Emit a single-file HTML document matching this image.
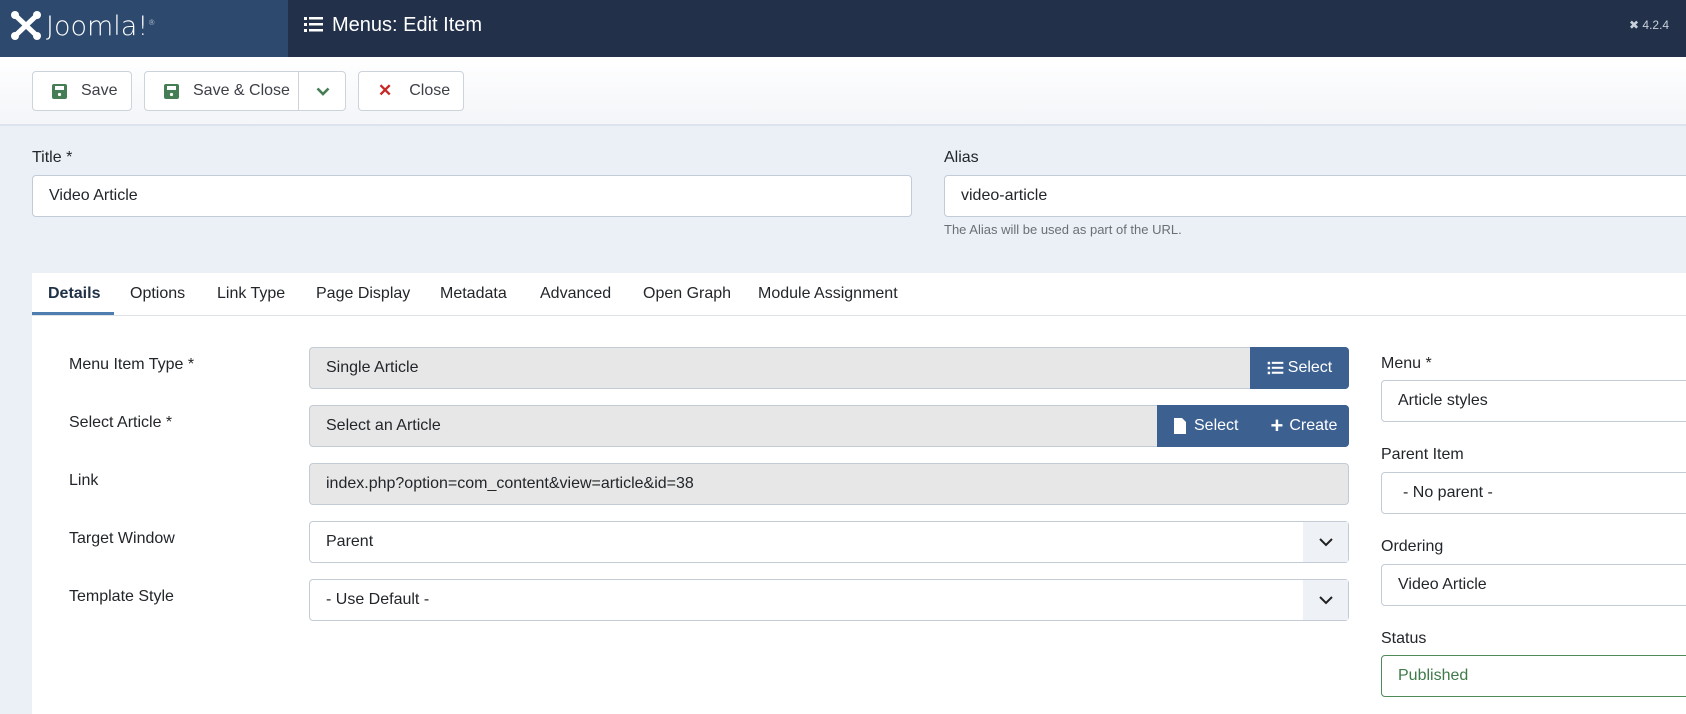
<!DOCTYPE html>
<html><head><meta charset="utf-8"><style>
*{box-sizing:border-box;margin:0;padding:0}
body{width:1686px;height:714px;overflow:hidden;background:#ebf0f6;font-family:"Liberation Sans",sans-serif;color:#22262a;position:relative}
.abs{position:absolute}
.hdr{left:0;top:0;width:1686px;height:57px;background:#22304a}
.logo{left:0;top:0;width:288px;height:57px;background:#2d4a6e}
.tb{left:0;top:57px;width:1686px;height:69px;background:linear-gradient(#fff,#f3f5f8);border-bottom:2px solid #dde3ec}
.btn{position:absolute;top:71px;height:40px;background:#fff;border:1px solid #cdd3da;border-radius:4px;font-size:16px;color:#3d4047;display:flex;align-items:center}
.lbl{position:absolute;font-size:16px;color:#22262a}
.inp{position:absolute;height:42px;background:#fff;border:1px solid #c3ccd6;border-radius:4px;font-size:16px;display:flex;align-items:center;padding-left:16px;color:#22262a}
.ro{background:#e7e7e7}
.bb{position:absolute;background:#3c6090;color:#fff;font-size:16px;display:flex;align-items:center;justify-content:center;gap:4px}
.chev{position:absolute;right:0;top:0;width:45px;height:40px;background:#eef2f7;display:flex;align-items:center;justify-content:center}
.tab{position:absolute;top:285px;font-size:16px;color:#22262a}
</style></head><body>
<div class="abs hdr"></div>
<div class="abs logo"></div>
<svg class="abs" style="left:10px;top:9px" width="32" height="32" viewBox="0 0 32 32"><g fill="none" stroke="#fff" stroke-width="5" stroke-linecap="round"><path d="M7 8 L25 25"/><path d="M25 8 L7 25"/></g><g fill="#fff"><circle cx="5" cy="6" r="4"/><circle cx="27" cy="6" r="4"/><circle cx="5" cy="27" r="4"/><circle cx="27" cy="27" r="4"/></g></svg>
<div class="abs" style="left:46px;top:11px;color:#fff;font-size:27px;font-family:'DejaVu Sans',sans-serif;font-weight:200;letter-spacing:0">Joomla!<sup style="font-size:7px">®</sup></div>
<svg class="abs" style="left:304px;top:16px" width="19" height="17" viewBox="0 0 19 17" fill="#fff"><rect x="0" y="1" width="3" height="3"/><rect x="0" y="7" width="3" height="3"/><rect x="0" y="13" width="3" height="3"/><rect x="5" y="1" width="14" height="2.5"/><rect x="5" y="7" width="14" height="2.5"/><rect x="5" y="13" width="14" height="2.5"/></svg>
<div class="abs" style="left:332px;top:14px;color:#fff;font-size:20px">Menus: Edit Item</div>
<div class="abs" style="left:1629px;top:18px;color:#c9d1dc;font-size:12px">✖ 4.2.4</div>
<div class="abs tb"></div>
<div class="btn" style="left:32px;width:100px"><svg style="margin:0 14px 0 19px" width="15" height="15" viewBox="0 0 15 15"><rect width="15" height="15" rx="2" fill="#457d54"/><rect x="3" y="2" width="9" height="4" fill="#fff"/><circle cx="7.5" cy="10.5" r="1.6" fill="#fff"/></svg>Save</div>
<div class="btn" style="left:144px;width:202px"><svg style="margin:0 14px 0 19px" width="15" height="15" viewBox="0 0 15 15"><rect width="15" height="15" rx="2" fill="#457d54"/><rect x="3" y="2" width="9" height="4" fill="#fff"/><circle cx="7.5" cy="10.5" r="1.6" fill="#fff"/></svg>Save &amp; Close<div style="position:absolute;left:153px;top:0;bottom:0;border-left:1px solid #cdd3da;width:48px;display:flex;align-items:center;justify-content:center"><svg width="14" height="9" viewBox="0 0 14 9"><path d="M1.5 1.5 L7 7 L12.5 1.5" stroke="#457d54" stroke-width="2.6" fill="none"/></svg></div></div>
<div class="btn" style="left:358px;width:106px"><span style="color:#c52827;font-weight:bold;font-size:17px;margin:0 17px 0 19px">✕</span>Close</div>

<div class="lbl" style="left:32px;top:149px">Title *</div>
<div class="inp" style="left:32px;top:175px;width:880px;height:42px">Video Article</div>
<div class="lbl" style="left:944px;top:149px">Alias</div>
<div class="inp" style="left:944px;top:175px;width:760px;height:42px">video-article</div>
<div class="lbl" style="left:944px;top:222px;font-size:13px;color:#6a6f75">The Alias will be used as part of the URL.</div>

<div class="abs" style="left:32px;top:273px;width:1654px;height:441px;background:#fff"></div>
<div class="abs" style="left:32px;top:315px;width:1654px;height:1px;background:#dfe3e8"></div>
<div class="abs" style="left:32px;top:312px;width:82px;height:3px;background:#4f7db0"></div>
<div class="tab" style="left:48px;font-weight:bold;color:#1f3047">Details</div>
<div class="tab" style="left:130px">Options</div>
<div class="tab" style="left:217px">Link Type</div>
<div class="tab" style="left:316px">Page Display</div>
<div class="tab" style="left:440px">Metadata</div>
<div class="tab" style="left:540px">Advanced</div>
<div class="tab" style="left:643px">Open Graph</div>
<div class="tab" style="left:758px">Module Assignment</div>

<div class="lbl" style="left:69px;top:356px">Menu Item Type *</div>
<div class="inp ro" style="left:309px;top:347px;width:1040px">Single Article</div>
<div class="bb" style="left:1250px;top:347px;width:99px;height:42px;border-radius:0 4px 4px 0"><svg width="17" height="14" viewBox="0 0 19 17" fill="#fff"><rect x="0" y="1" width="3" height="3"/><rect x="0" y="7" width="3" height="3"/><rect x="0" y="13" width="3" height="3"/><rect x="5" y="1" width="14" height="2.5"/><rect x="5" y="7" width="14" height="2.5"/><rect x="5" y="13" width="14" height="2.5"/></svg>Select</div>

<div class="lbl" style="left:69px;top:414px">Select Article *</div>
<div class="inp ro" style="left:309px;top:405px;width:1040px">Select an Article</div>
<div class="bb" style="left:1157px;top:405px;width:192px;height:42px;border-radius:0 4px 4px 0;justify-content:flex-start"><svg style="margin-left:17px" width="12" height="16" viewBox="0 0 12 16"><path d="M0 0H8L12 4V16H0Z" fill="#fff"/></svg><span style="margin-left:4px">Select</span><span style="margin-left:28px;font-weight:bold;font-size:22px">+</span><span style="margin-left:2px">Create</span></div>

<div class="lbl" style="left:69px;top:472px">Link</div>
<div class="inp ro" style="left:309px;top:463px;width:1040px">index.php?option=com_content&amp;view=article&amp;id=38</div>

<div class="lbl" style="left:69px;top:530px">Target Window</div>
<div class="inp" style="left:309px;top:521px;width:1040px">Parent<div class="chev"><svg width="14" height="9" viewBox="0 0 14 9"><path d="M1 1 L7 7 L13 1" stroke="#222" stroke-width="2" fill="none"/></svg></div></div>

<div class="lbl" style="left:69px;top:588px">Template Style</div>
<div class="inp" style="left:309px;top:579px;width:1040px">- Use Default -<div class="chev"><svg width="14" height="9" viewBox="0 0 14 9"><path d="M1 1 L7 7 L13 1" stroke="#222" stroke-width="2" fill="none"/></svg></div></div>

<div class="lbl" style="left:1381px;top:355px">Menu *</div>
<div class="inp" style="left:1381px;top:380px;width:340px">Article styles</div>
<div class="lbl" style="left:1381px;top:446px">Parent Item</div>
<div class="inp" style="left:1381px;top:472px;width:340px;padding-left:21px">- No parent -</div>
<div class="lbl" style="left:1381px;top:538px">Ordering</div>
<div class="inp" style="left:1381px;top:564px;width:340px">Video Article</div>
<div class="lbl" style="left:1381px;top:630px">Status</div>
<div class="inp" style="left:1381px;top:655px;width:340px;border-color:#4e8a5a;color:#3f7a49">Published</div>
</body></html>
